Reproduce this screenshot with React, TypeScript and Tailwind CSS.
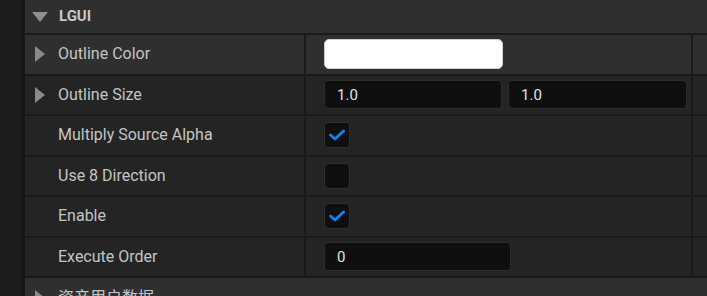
import type { ReactNode } from 'react'

function ArrowRight() {
  return (
    <svg width="10" height="16" viewBox="0 0 10 16" className="shrink-0">
      <path d="M0 0 L10 8 L0 16 Z" fill="#8a8a8a" />
    </svg>
  )
}

function ArrowDown() {
  return (
    <svg width="16" height="10" viewBox="0 0 16 10" className="shrink-0">
      <path d="M0 0 L16 0 L8 10 Z" fill="#8f8f8f" />
    </svg>
  )
}

function Checkbox({ checked }: { checked: boolean }) {
  return (
    <div className="w-[26px] h-[26px] rounded-[4px] bg-[#0f0f0f] border border-[#2e2e2e] flex items-center justify-center">
      {checked && (
        <svg width="18" height="14" viewBox="0 0 18 14">
          <path d="M2.5 7 L7 11 L15.5 3" fill="none" stroke="#1a7fe8" strokeWidth="3" strokeLinecap="round" strokeLinejoin="round" />
        </svg>
      )}
    </div>
  )
}

function NumBox({ value, w }: { value: string; w: string }) {
  return (
    <div className={`${w} h-[29px] rounded-[4px] bg-[#0f0f0f] border border-[#2c2c2c] flex items-center pl-3 text-[15px] text-[#e2e2e2]`}>
      {value}
    </div>
  )
}

function Row({
  label,
  expandable,
  light,
  children,
}: {
  label: string
  expandable?: boolean
  light?: boolean
  children: ReactNode
}) {
  return (
    <div className={`flex shrink-0 h-[40.5px] border-t-2 border-[#1a1a1a] ${light ? 'bg-[#2f2f2f]' : 'bg-[#242424]'}`}>
      <div className="w-[279px] flex items-center pl-[10px]">
        <div className="w-[23px] flex items-center">{expandable && <ArrowRight />}</div>
        <span className="text-[16px] text-[#c4c4c4]">{label}</span>
      </div>
      <div className="w-[2px] bg-[#1a1a1a]" />
      <div className="w-[385px] flex items-center pl-[18px] gap-[6px]">{children}</div>
      <div className="w-[2px] bg-[#1a1a1a]" />
      <div className="flex-1" />
    </div>
  )
}

export default function App() {
  return (
    <div
      className="w-[707px] h-[296px] overflow-hidden flex bg-[#1c1c1c]"
      style={{ fontFamily: 'Roboto, "Noto Sans CJK SC", sans-serif' }}
    >
      <div className="w-[21px] bg-[#1c1c1c]" />
      <div className="w-[4px] bg-[#171717]" />
      <div className="flex-1 flex flex-col">
        {/* header */}
        <div className="h-[33px] shrink-0 bg-[#2f2f2f] flex items-center pl-[7px] gap-[11px]">
          <ArrowDown />
          <span className="text-[15px] font-bold text-[#c8c8c8]">LGUI</span>
        </div>

        <Row label="Outline Color" expandable light>
          <div className="w-[179px] h-[30px] rounded-[5px] bg-white border border-[#cfcfcf]" />
        </Row>
        <Row label="Outline Size" expandable>
          <NumBox value="1.0" w="w-[178px]" />
          <NumBox value="1.0" w="w-[179px]" />
        </Row>
        <Row label="Multiply Source Alpha">
          <Checkbox checked />
        </Row>
        <Row label="Use 8 Direction">
          <Checkbox checked={false} />
        </Row>
        <Row label="Enable">
          <Checkbox checked />
        </Row>
        <Row label="Execute Order">
          <NumBox value="0" w="w-[187px]" />
        </Row>

        {/* next category */}
        <div className="h-[30px] shrink-0 border-t-2 border-[#1a1a1a] bg-[#2f2f2f] flex items-start pl-[10px] pt-[12px] gap-[13px]">
          <ArrowRight />
          <span className="text-[16px] text-[#c4c4c4] leading-none">资产用户数据</span>
        </div>
      </div>
    </div>
  )
}
